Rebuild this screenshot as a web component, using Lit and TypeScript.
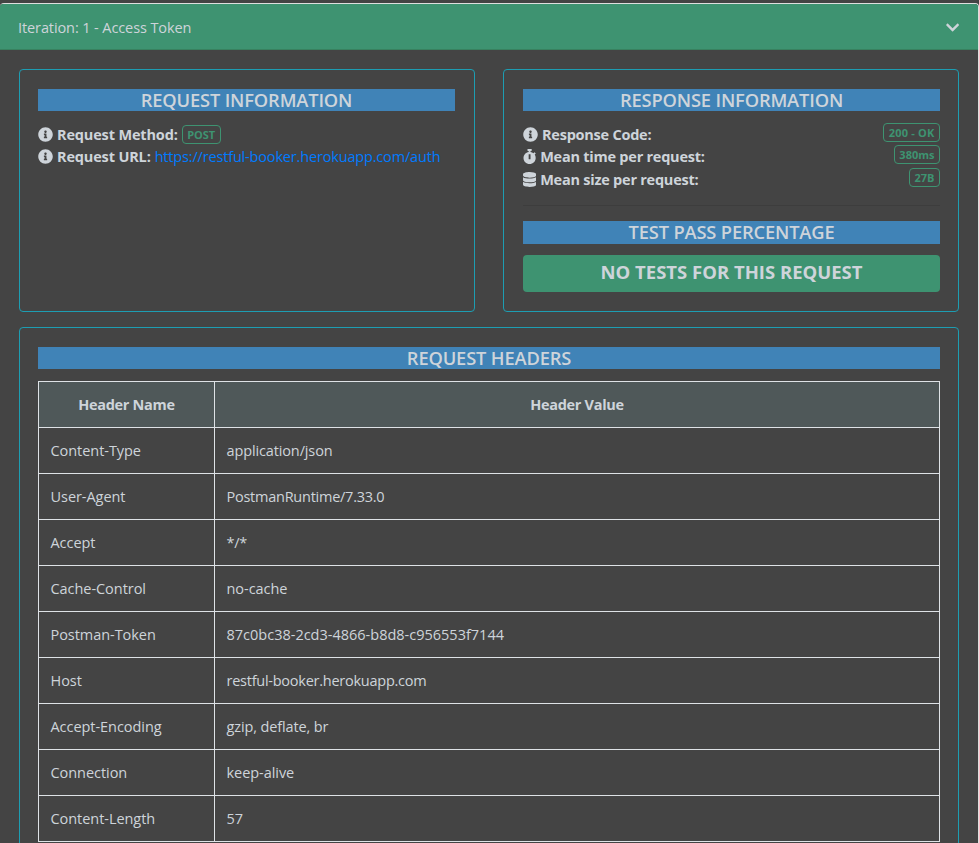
import { LitElement, html, css, svg } from "lit";
import { customElement } from "lit/decorators.js";

const INFO = "M256 8C119.043 8 8 119.083 8 256c0 136.997 111.043 248 248 248s248-111.003 248-248C504 119.083 392.957 8 256 8zm0 110c23.196 0 42 18.804 42 42s-18.804 42-42 42-42-18.804-42-42 18.804-42 42-42zm56 254c0 6.627-5.373 12-12 12h-88c-6.627 0-12-5.373-12-12v-24c0-6.627 5.373-12 12-12h12v-64h-12c-6.627 0-12-5.373-12-12v-24c0-6.627 5.373-12 12-12h64c6.627 0 12 5.373 12 12v100h12c6.627 0 12 5.373 12 12v24z";
const WATCH = "M432 304c0 114.9-93.1 208-208 208S16 418.9 16 304c0-104 76.3-190.2 176-205.5V64h-28c-6.6 0-12-5.4-12-12V12c0-6.6 5.4-12 12-12h120c6.6 0 12 5.4 12 12v40c0 6.6-5.4 12-12 12h-28v34.5c37.5 5.8 71.7 21.6 99.7 44.6l27.5-27.5c4.7-4.7 12.3-4.7 17 0l28.3 28.3c4.7 4.7 4.7 12.3 0 17l-29.4 29.4-.6.6C419.7 223.3 432 262.2 432 304zm-176 36V188.5c0-6.6-5.4-12-12-12h-40c-6.6 0-12 5.4-12 12V340c0 6.6 5.4 12 12 12h40c6.6 0 12-5.4 12-12z";
const DATABASE = "M448 73.143v45.714C448 159.143 347.667 192 224 192S0 159.143 0 118.857V73.143C0 32.857 100.333 0 224 0s224 32.857 224 73.143zM448 176v102.857C448 319.143 347.667 352 224 352S0 319.143 0 278.857V176c48.125 33.143 136.208 48.572 224 48.572S399.874 209.143 448 176zm0 160v102.857C448 479.143 347.667 512 224 512S0 479.143 0 438.857V336c48.125 33.143 136.208 48.572 224 48.572S399.874 369.143 448 336z";
const CHEVRON = "M207.029 381.476L12.686 187.132c-9.373-9.373-9.373-24.569 0-33.941l22.667-22.667c9.357-9.357 24.522-9.375 33.901-.04L224 284.505l154.745-154.021c9.379-9.335 24.544-9.317 33.901.04l22.667 22.667c9.373 9.373 9.373 24.569 0 33.941L240.971 381.476c-9.373 9.372-24.569 9.372-33.942 0z";

const icon = (path: string, width: number) => html`<svg
  class="icon ${width === 512 ? "wide" : "narrow"}" viewBox="0 0 ${width} 512">${svg`<path d=${path} />`}</svg>`;

const HEADERS: [string, string, string][] = [
  ["Content-Type", "application/json", "snug"],
  ["User-Agent", "PostmanRuntime/7.33.0", "tight"],
  ["Accept", "*/*", "tight"],
  ["Cache-Control", "no-cache", ""],
  ["Postman-Token", "87c0bc38-2cd3-4866-b8d8-c956553f7144", "plain"],
  ["Host", "restful-booker.herokuapp.com", "tight"],
  ["Accept-Encoding", "gzip, deflate, br", "snug"],
  ["Connection", "keep-alive", ""],
  ["Content-Length", "57", "plain"],
];

@customElement("app-root")
export class AppRoot extends LitElement {
  static styles = css`
    :host {
      display: block;
      box-sizing: border-box;
      height: 843px;
      overflow: hidden;
      padding-top: 3px;
      background: #444;
      color: #ced4da;
      font: 14.5px/22.5px "Open Sans", "Noto Sans", sans-serif;
    }
    * { box-sizing: border-box; }
    .panel {
      height: 1000px;
      border-top: 1px solid #dfdfdf;
      border-right: 1px solid #dfdfdf;
      border-radius: 4px 4px 0 0;
    }
    .bar {
      display: flex;
      align-items: center;
      justify-content: space-between;
      height: 46px;
      padding: 2px 19px 0 18px;
      background: #3e9371;
      border-bottom: 1px solid #38815f;
      border-radius: 3px 3px 0 0;
    }
    .title { letter-spacing: -0.1px; padding-top: 2px; }
    .icon { flex: none; height: 15px; fill: currentColor; display: block; }
    .wide { width: 15px; }
    .narrow { width: 13.2px; }
    .body {
      display: grid;
      grid-template-columns: 456px 456px;
      column-gap: 28px;
      row-gap: 15px;
      padding: 19px 0 0 19px;
    }
    .card {
      border: 1px solid #1d9db2;
      border-radius: 4px;
      padding: 19px 19px 0 18px;
      height: 243px;
    }
    .card.right { padding: 19px 18px 0 19px; }
    .card.full { grid-column: 1 / 3; height: 600px; padding-right: 18px; }
    h5 {
      margin: 0;
      height: 22px;
      background: #4083b7;
      text-align: center;
      font-size: 18.3px;
      font-weight: 600;
      line-height: 22px;
      letter-spacing: -0.15px;
    }
    .line { display: flex; align-items: center; height: 22.5px; gap: 4px; }
    .lines { padding-top: 12px; }
    b { font-weight: 700; letter-spacing: -0.16px; padding-top: 1px; }
    .right b { letter-spacing: -0.24px; }
    a { color: #007bff; text-decoration: none; letter-spacing: -0.17px; }
    .badge {
      height: 19px;
      margin-top: 1px;
      padding: 0 4.5px;
      border: 1px solid #3e9371;
      border-radius: 4px;
      color: #3e9371;
      font-size: 11px;
      font-weight: 700;
      line-height: 18px;
    }
    .right .badge { margin: -4px 0 0 auto; line-height: 17px; }
    .code { letter-spacing: 0.2px; }
    hr { margin: 14px 0 15px; border: 0; border-top: 1px solid #3d3d3d; }
    .result {
      margin-top: 11px;
      height: 37px;
      border-radius: 4px;
      background: #3e9371;
      text-align: center;
      font-size: 18.5px;
      font-weight: 700;
      line-height: 34px;
    }
    h5.tall { height: 23px; }
    table {
      width: 902px;
      margin-top: 12px;
      border-collapse: collapse;
      table-layout: fixed;
    }
    th, td { height: 46px; padding: 2px 11.5px 0; border: 1px solid #dee2e6; text-align: left; }
    td { letter-spacing: -0.05px; }
    th { background: #4f5859; text-align: center; font-weight: 700; letter-spacing: -0.3px; }
    .snug { letter-spacing: -0.13px; }
    .tight { letter-spacing: -0.25px; }
    .plain { letter-spacing: 0; }
    .name { width: 176px; }
  `;

  render() {
    return html`
      <div class="panel">
        <div class="bar"><span class="title">Iteration: 1 - Access Token</span>${icon(CHEVRON, 448)}</div>
        <div class="body">
          <section class="card">
            <h5>REQUEST INFORMATION</h5>
            <div class="lines">
              <div class="line">${icon(INFO, 512)}<b>Request Method:</b><span class="badge">POST</span></div>
              <div class="line">${icon(INFO, 512)}<b>Request URL:</b><a>https://restful-booker.herokuapp.com/auth</a></div>
            </div>
          </section>
          <section class="card right">
            <h5>RESPONSE INFORMATION</h5>
            <div class="lines">
              <div class="line">${icon(INFO, 512)}<b>Response Code:</b><span class="badge code">200 - OK</span></div>
              <div class="line">${icon(WATCH, 448)}<b>Mean time per request:</b><span class="badge">380ms</span></div>
              <div class="line">${icon(DATABASE, 448)}<b>Mean size per request:</b><span class="badge">27B</span></div>
            </div>
            <hr />
            <h5 class="tall">TEST PASS PERCENTAGE</h5>
            <div class="result">NO TESTS FOR THIS REQUEST</div>
          </section>
          <section class="card full">
            <h5>REQUEST HEADERS</h5>
            <table>
              <tr><th class="name">Header Name</th><th>Header Value</th></tr>
              ${HEADERS.map(([name, value, fit]) => html`<tr><td>${name}</td><td class=${fit}>${value}</td></tr>`)}
            </table>
          </section>
        </div>
      </div>
    `;
  }
}
